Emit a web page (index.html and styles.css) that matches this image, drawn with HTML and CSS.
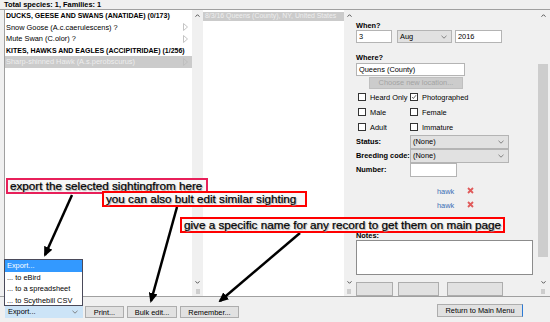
FILE: index.html
```html
<!DOCTYPE html>
<html>
<head>
<meta charset="utf-8">
<link rel="stylesheet" href="styles.css">
</head>
<body>
<div class="app">
  <div class="summary">Total species: 1, Families: 1</div>
  <div class="panes">
    <div class="list species-list">
      <div class="row group">DUCKS, GEESE AND SWANS (ANATIDAE) (0/173)</div>
      <div class="row"><span class="row-text">Snow Goose (A.c.caerulescens) ?</span><svg class="tri" viewBox="0 0 5 8"><path d="M0.5 0.5 L4.5 4 L0.5 7.5 Z"/></svg></div>
      <div class="row"><span class="row-text">Mute Swan (C.olor) ?</span><svg class="tri" viewBox="0 0 5 8"><path d="M0.5 0.5 L4.5 4 L0.5 7.5 Z"/></svg></div>
      <div class="row group">KITES, HAWKS AND EAGLES (ACCIPITRIDAE) (1/256)</div>
      <div class="row selected"><span class="row-text">Sharp-shinned Hawk (A.s.perobscurus)</span><svg class="tri" viewBox="0 0 5 8"><path d="M0.5 0.5 L4.5 4 L0.5 7.5 Z"/></svg></div>
    </div>
    <div class="vscroll wide">
      <svg class="chev" viewBox="0 0 5 3"><path d="M0.5 2.7 L2.5 0.7 L4.5 2.7"/></svg>
      <div class="spacer"></div>
      <svg class="chev" viewBox="0 0 5 3"><path d="M0.5 0.3 L2.5 2.3 L4.5 0.3"/></svg>
      <svg class="grip" viewBox="0 0 4 5"><path d="M1 0 V5 M3 0 V5"/></svg>
    </div>
    <div class="list sightings">
      <div class="sighting">8/3/16 Queens (County), NY, United States</div>
    </div>
    <div class="vscroll">
      <svg class="chev" viewBox="0 0 5 3"><path d="M0.5 2.7 L2.5 0.7 L4.5 2.7"/></svg>
      <div class="spacer"></div>
      <svg class="chev" viewBox="0 0 5 3"><path d="M0.5 0.3 L2.5 2.3 L4.5 0.3"/></svg>
      <svg class="grip" viewBox="0 0 4 5"><path d="M1 0 V5 M3 0 V5"/></svg>
    </div>
    <div class="form">
      <div class="label when">When?</div>
      <div class="date-row">
        <div class="field day">3</div>
        <div class="dropdown month">Aug<svg class="dd" viewBox="0 0 6 4"><path d="M0.5 0.8 L3 3.2 L5.5 0.8"/></svg></div>
        <div class="field year">2016</div>
      </div>
      <div class="label where">Where?</div>
      <div class="field location">Queens (County)</div>
      <div class="btn disabled choose">Choose new location...</div>
      <div class="checks">
        <div class="check"><span class="box"></span>Heard Only</div>
        <div class="check"><span class="box"><svg viewBox="0 0 7 7"><path d="M1.2 3.6 L2.8 5.2 L5.9 1.4"/></svg></span>Photographed</div>
        <div class="check"><span class="box"></span>Male</div>
        <div class="check"><span class="box"></span>Female</div>
        <div class="check"><span class="box"></span>Adult</div>
        <div class="check"><span class="box"></span>Immature</div>
      </div>
      <div class="fields">
        <div class="flabel">Status:</div>
        <div class="dropdown wide">(None)<svg class="dd" viewBox="0 0 6 4"><path d="M0.5 0.8 L3 3.2 L5.5 0.8"/></svg></div>
        <div class="flabel">Breeding code:</div>
        <div class="dropdown wide">(None)<svg class="dd" viewBox="0 0 6 4"><path d="M0.5 0.8 L3 3.2 L5.5 0.8"/></svg></div>
        <div class="flabel">Number:</div>
        <div class="field number"></div>
      </div>
      <div class="tags">
        <div class="tag"><span class="tag-link">hawk</span><svg class="del" viewBox="0 0 7 7"><path d="M1 1 L6 6 M6 1 L1 6"/></svg></div>
        <div class="tag"><span class="tag-link">hawk</span><svg class="del" viewBox="0 0 7 7"><path d="M1 1 L6 6 M6 1 L1 6"/></svg></div>
      </div>
      <div class="label notes">Notes:</div>
      <div class="textarea"></div>
      <div class="form-buttons">
        <div class="btn fb1"></div>
        <div class="btn fb2"></div>
        <div class="btn fb3"></div>
      </div>
    </div>
    <div class="scrollbar">
      <svg class="chev" viewBox="0 0 5 3"><path d="M0.5 2.7 L2.5 0.7 L4.5 2.7"/></svg>
      <div class="track"><div class="thumb"></div></div>
      <svg class="chev" viewBox="0 0 5 3"><path d="M0.5 0.3 L2.5 2.3 L4.5 0.3"/></svg>
      <svg class="grip" viewBox="0 0 4 5"><path d="M1 0 V5 M3 0 V5"/></svg>
    </div>
  </div>
  <div class="bottombar">
    <div class="dropdown export">Export...<svg class="dd" viewBox="0 0 6 4"><path d="M0.5 0.8 L3 3.2 L5.5 0.8"/></svg></div>
    <div class="btn print">Print...</div>
    <div class="btn bulk">Bulk edit...</div>
    <div class="btn remember">Remember...</div>
    <div class="btn return">Return to Main Menu</div>
  </div>
</div>

<div class="export-menu">
  <div class="menu-item active">Export...</div>
  <div class="menu-item">... to eBird</div>
  <div class="menu-item">... to a spreadsheet</div>
  <div class="menu-item">... to Scythebill CSV</div>
</div>

<svg class="arrows" viewBox="0 0 550 322" width="550" height="322">
  <defs>
    <marker id="head" markerUnits="userSpaceOnUse" markerWidth="10" markerHeight="9" refX="8" refY="4.5" orient="auto">
      <path d="M0 0 L10 4.5 L0 9 Z" fill="#000"/>
    </marker>
  </defs>
  <line x1="72" y1="195" x2="45" y2="255" marker-end="url(#head)"/>
  <line x1="177" y1="207" x2="151" y2="301" marker-end="url(#head)"/>
  <line x1="300" y1="233" x2="220" y2="301" marker-end="url(#head)"/>
</svg>

<div class="note note-export">export the selected sightingfrom here</div>
<div class="note note-bulk">you can also bult edit similar sighting</div>
<div class="note note-remember">give a specific name for any record to get them on main page</div>
</body>
</html>
```

FILE: styles.css
```css
* { box-sizing: border-box; }
html, body { margin: 0; padding: 0; }
body {
  width: 550px;
  height: 322px;
  overflow: hidden;
  position: relative;
  background: #f0f0f0;
  font-family: "Liberation Sans", Arial, sans-serif;
  font-size: 7.4px;
  color: #000;
}
.app { display: flex; flex-direction: column; height: 322px; }

.summary {
  height: 10px;
  line-height: 9px;
  padding-left: 4px;
  font-weight: bold;
  border-bottom: 1px solid #a0a0a0;
}

.panes {
  display: flex;
  height: 287px;
  border-bottom: 1px solid #a0a0a0;
}

.list { background: #fff; overflow: hidden; }
.species-list {
  margin-left: 4px;
  width: 188px;
  border-left: 1px solid #a0a0a0;
}
.row {
  height: 11.5px;
  line-height: 11.5px;
  padding-left: 1px;
  padding-right: 4px;
  white-space: nowrap;
  display: flex;
  align-items: center;
  justify-content: space-between;
  overflow: hidden;
}
.row.group { font-weight: bold; font-size: 7px; }
.row.selected { background: #cbcbcb; color: #eeeeee; }
.tri { width: 5px; height: 8px; flex: none; }
.tri path { fill: none; stroke: #bdbdbd; stroke-width: 0.9; }

.vscroll {
  width: 10px;
  display: flex;
  flex-direction: column;
  align-items: center;
  padding: 4px 0 2px;
  background: #f0f0f0;
}
.vscroll.wide { width: 11px; }
.chev { width: 5px; height: 3px; flex: none; }
.chev path { fill: none; stroke: #555; stroke-width: 1; }
.spacer { flex: 1; }
.grip { width: 4px; height: 5px; margin-top: 5px; flex: none; }
.grip path { stroke: #9a9a9a; stroke-width: 0.8; }

.sightings { width: 141px; padding-top: 2px; }
.sighting {
  height: 8.5px;
  line-height: 8.5px;
  font-size: 6.9px;
  background: #cbcbcb;
  color: #eeeeee;
  padding-left: 2px;
  white-space: nowrap;
}

.form {
  width: 184px;
  padding-left: 2px;
  overflow: hidden;
  display: flex;
  flex-direction: column;
  align-items: flex-start;
}
.label { font-weight: bold; height: 9px; line-height: 9px; }
.when { margin-top: 11px; }
.where { margin-top: 10px; }
.notes { margin-top: 18px; }

.field {
  background: #fff;
  border: 1px solid #b4b4b4;
  height: 13px;
  line-height: 11px;
  padding-left: 2px;
}
.dropdown {
  background: #e1e1e1;
  border: 1px solid #b4b4b4;
  height: 14px;
  line-height: 12px;
  padding-left: 2px;
  display: flex;
  align-items: center;
  justify-content: space-between;
  padding-right: 4px;
}
.dd { width: 6px; height: 4px; flex: none; }
.dd path { fill: none; stroke: #777; stroke-width: 0.9; }

.date-row { display: flex; height: 13px; }
.day { width: 36px; }
.month { width: 55px; height: 13px; margin-left: 5px; }
.year { width: 47px; margin-left: 3px; }
.location { width: 109px; margin-top: 1px; }

.btn {
  background: #e1e1e1;
  border: 1px solid #adadad;
  display: flex;
  align-items: center;
  justify-content: center;
  white-space: nowrap;
}
.btn.disabled { background: #cccccc; border-color: #bfbfbf; color: #a3a3a3; }
.choose { width: 94px; height: 14px; margin-left: 13px; margin-top: 1px; }

.checks {
  display: grid;
  grid-template-columns: 54px 80px;
  grid-auto-rows: 15px;
  margin-top: 1px;
}
.check { display: flex; align-items: center; }
.box {
  width: 8px;
  height: 8px;
  border: 1px solid #333;
  background: #fff;
  margin-left: 2px;
  margin-right: 4px;
  display: flex;
}
.check:nth-child(2n) .box { margin-left: 0; margin-right: 4px; }
.box svg { width: 6px; height: 6px; }
.box path { fill: none; stroke: #333; stroke-width: 0.9; }

.fields {
  display: grid;
  grid-template-columns: 54px 99px;
  grid-auto-rows: 14px;
}
.flabel { font-weight: bold; line-height: 14px; white-space: nowrap; }
.dropdown.wide { width: 99px; }
.number { width: 47px; height: 14px; }

.tags { margin-top: 8px; display: flex; flex-direction: column; }
.tag { height: 14px; display: flex; align-items: center; padding-left: 81px; }
.tag-link { color: #3a6db5; }
.del { width: 7px; height: 7px; margin-left: 12.5px; margin-top: -3px; }
.del path { stroke: #e05a5a; stroke-width: 1.8; }

.textarea {
  width: 177px;
  height: 44px;
  background: #fff;
  border: 1px solid #8c8c8c;
}
.form-buttons { display: flex; margin-top: 7px; }
.fb1 { width: 37px; height: 14px; }
.fb2 { width: 41px; height: 14px; margin-left: 5px; }
.fb3 { width: 56px; height: 14px; margin-left: 8px; }

.scrollbar {
  width: 10px;
  display: flex;
  flex-direction: column;
  align-items: center;
  padding: 4px 0 2px;
}
.track { flex: 1; width: 10px; padding-top: 47px; padding-bottom: 24px; display: flex; }
.thumb { flex: 1; background: #cdcdcd; }

.bottombar {
  height: 25px;
  display: flex;
  align-items: flex-start;
  padding-top: 9px;
}
.export {
  width: 78px;
  height: 12px;
  margin-left: 5px;
  background: #cce4f7;
  border-color: #cce4f7;
}
.print { width: 39px; height: 12px; margin-left: 2px; }
.bulk { width: 50px; height: 12px; margin-left: 3px; }
.remember { width: 59px; height: 12px; margin-left: 3px; }
.return {
  width: 86px;
  height: 13px;
  margin-left: auto;
  margin-right: 27px;
  margin-top: -2px;
  border-right: 1px solid #2b7ad6;
}

.export-menu {
  position: absolute;
  left: 4px;
  top: 259px;
  width: 79px;
  height: 47px;
  background: #fff;
  border: 1px solid #4a4a5a;
}
.menu-item { height: 11.5px; line-height: 11.5px; padding-left: 2px; white-space: nowrap; }
.menu-item.active { background: #3399ff; color: #fff; }

.arrows { position: absolute; left: 0; top: 0; pointer-events: none; }
.arrows line { stroke: #000; stroke-width: 2.5; }

.note {
  position: absolute;
  height: 16px;
  border: 2px solid #f00;
  background: #f7f7f7;
  font-size: 11.7px;
  line-height: 12px;
  padding-left: 2px;
  white-space: nowrap;
  color: #000;
  -webkit-text-stroke: 0.2px #000;
  text-shadow: 1px 1px 1px #a0a0a0;
}
.note-export { left: 6px; top: 178px; width: 202px; border-color: #e8205a; }
.note-bulk { left: 102px; top: 191px; width: 205px; }
.note-remember { left: 180px; top: 217px; width: 325px; }
```
